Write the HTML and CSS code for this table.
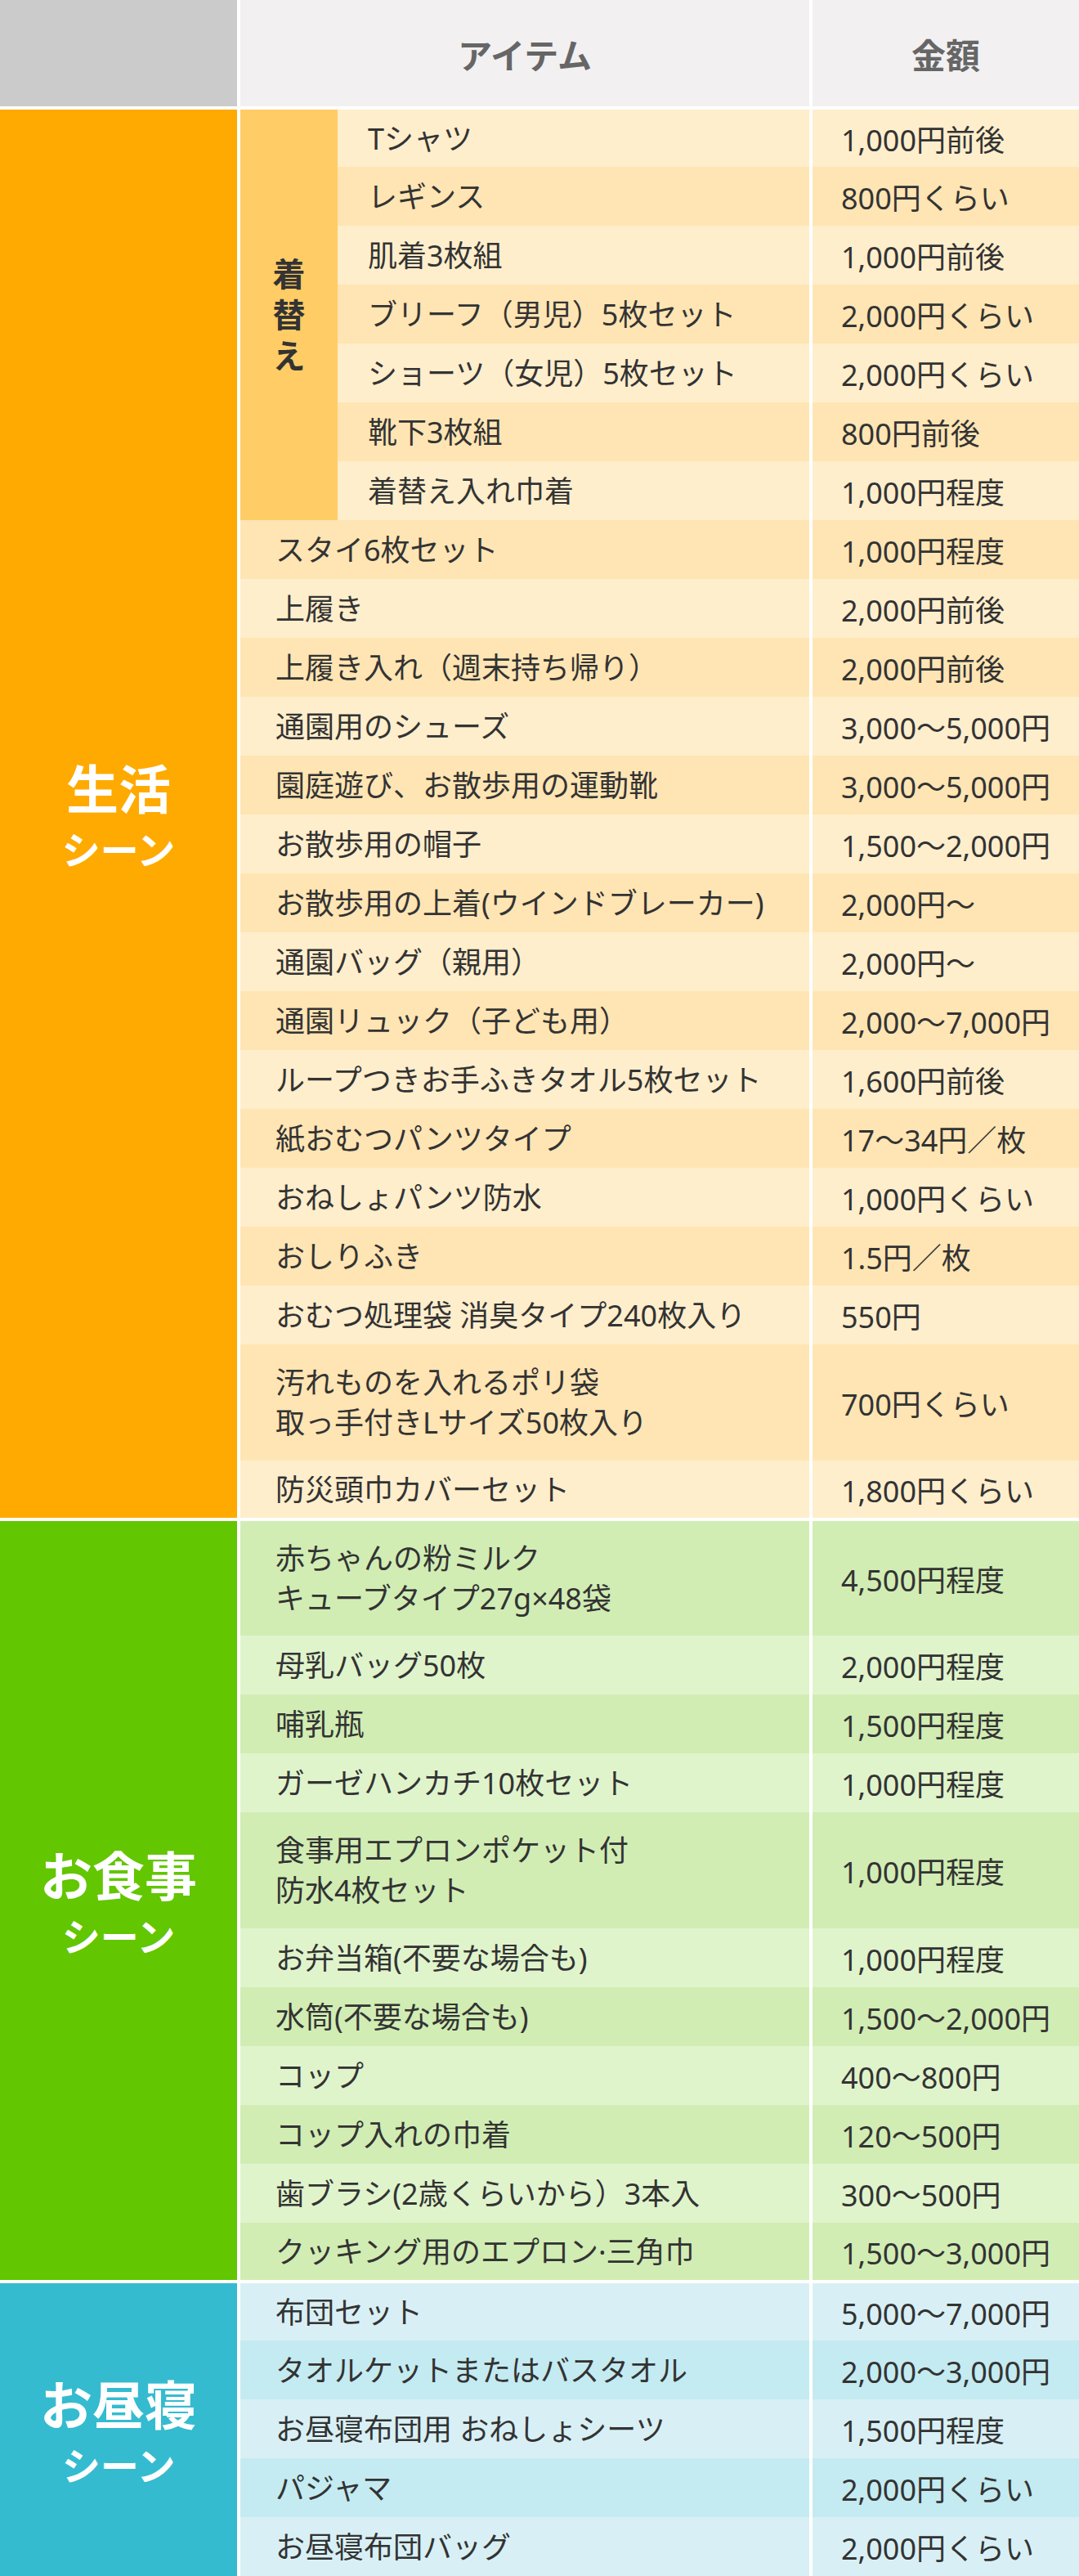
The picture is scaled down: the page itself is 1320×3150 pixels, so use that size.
FILE: index.html
```html
<!DOCTYPE html>
<html lang="ja">
<head>
<meta charset="utf-8">
<title>入園準備 費用一覧</title>
<link rel="stylesheet" href="styles.css">
</head>
<body>
<div class="tbl">
  <div class="head">
    <div class="corner"></div>
    <div class="hcell">アイテム</div>
    <div class="hcell">金額</div>
  </div>

  <section class="sec life">
    <div class="label"><span class="big">生活</span><span class="small">シーン</span></div>
    <div class="rows">
      <div class="group">
        <div class="sublabel"><span>着替え</span></div>
        <div class="subrows">
          <div class="row a first"><div class="item in">Tシャツ</div><div class="price">1,000円前後</div></div>
          <div class="row b"><div class="item in">レギンス</div><div class="price">800円くらい</div></div>
          <div class="row a"><div class="item in">肌着3枚組</div><div class="price">1,000円前後</div></div>
          <div class="row b"><div class="item in">ブリーフ（男児）5枚セット</div><div class="price">2,000円くらい</div></div>
          <div class="row a"><div class="item in">ショーツ（女児）5枚セット</div><div class="price">2,000円くらい</div></div>
          <div class="row b"><div class="item in">靴下3枚組</div><div class="price">800円前後</div></div>
          <div class="row a"><div class="item in">着替え入れ巾着</div><div class="price">1,000円程度</div></div>
        </div>
      </div>
      <div class="row b"><div class="item">スタイ6枚セット</div><div class="price">1,000円程度</div></div>
      <div class="row a"><div class="item">上履き</div><div class="price">2,000円前後</div></div>
      <div class="row b"><div class="item">上履き入れ（週末持ち帰り）</div><div class="price">2,000円前後</div></div>
      <div class="row a"><div class="item">通園用のシューズ</div><div class="price">3,000〜5,000円</div></div>
      <div class="row b"><div class="item">園庭遊び、お散歩用の運動靴</div><div class="price">3,000〜5,000円</div></div>
      <div class="row a"><div class="item">お散歩用の帽子</div><div class="price">1,500〜2,000円</div></div>
      <div class="row b"><div class="item">お散歩用の上着(ウインドブレーカー)</div><div class="price">2,000円〜</div></div>
      <div class="row a"><div class="item">通園バッグ（親用）</div><div class="price">2,000円〜</div></div>
      <div class="row b"><div class="item">通園リュック（子ども用）</div><div class="price">2,000〜7,000円</div></div>
      <div class="row a"><div class="item">ループつきお手ふきタオル5枚セット</div><div class="price">1,600円前後</div></div>
      <div class="row b"><div class="item">紙おむつパンツタイプ</div><div class="price">17〜34円／枚</div></div>
      <div class="row a"><div class="item">おねしょパンツ防水</div><div class="price">1,000円くらい</div></div>
      <div class="row b"><div class="item">おしりふき</div><div class="price">1.5円／枚</div></div>
      <div class="row a"><div class="item">おむつ処理袋 消臭タイプ240枚入り</div><div class="price">550円</div></div>
      <div class="row b two"><div class="item">汚れものを入れるポリ袋<br>取っ手付きLサイズ50枚入り</div><div class="price">700円くらい</div></div>
      <div class="row a last"><div class="item">防災頭巾カバーセット</div><div class="price">1,800円くらい</div></div>
    </div>
  </section>

  <section class="sec meal">
    <div class="label"><span class="big">お食事</span><span class="small">シーン</span></div>
    <div class="rows">
      <div class="row b two first"><div class="item">赤ちゃんの粉ミルク<br>キューブタイプ27g×48袋</div><div class="price">4,500円程度</div></div>
      <div class="row a"><div class="item">母乳バッグ50枚</div><div class="price">2,000円程度</div></div>
      <div class="row b"><div class="item">哺乳瓶</div><div class="price">1,500円程度</div></div>
      <div class="row a"><div class="item">ガーゼハンカチ10枚セット</div><div class="price">1,000円程度</div></div>
      <div class="row b two"><div class="item">食事用エプロンポケット付<br>防水4枚セット</div><div class="price">1,000円程度</div></div>
      <div class="row a"><div class="item">お弁当箱(不要な場合も)</div><div class="price">1,000円程度</div></div>
      <div class="row b"><div class="item">水筒(不要な場合も)</div><div class="price">1,500〜2,000円</div></div>
      <div class="row a"><div class="item">コップ</div><div class="price">400〜800円</div></div>
      <div class="row b"><div class="item">コップ入れの巾着</div><div class="price">120〜500円</div></div>
      <div class="row a"><div class="item">歯ブラシ(2歳くらいから）3本入</div><div class="price">300〜500円</div></div>
      <div class="row b last"><div class="item">クッキング用のエプロン·三角巾</div><div class="price">1,500〜3,000円</div></div>
    </div>
  </section>

  <section class="sec nap">
    <div class="label"><span class="big">お昼寝</span><span class="small">シーン</span></div>
    <div class="rows">
      <div class="row a first"><div class="item">布団セット</div><div class="price">5,000〜7,000円</div></div>
      <div class="row b"><div class="item">タオルケットまたはバスタオル</div><div class="price">2,000〜3,000円</div></div>
      <div class="row a"><div class="item">お昼寝布団用 おねしょシーツ</div><div class="price">1,500円程度</div></div>
      <div class="row b"><div class="item">パジャマ</div><div class="price">2,000円くらい</div></div>
      <div class="row a"><div class="item">お昼寝布団バッグ</div><div class="price">2,000円くらい</div></div>
    </div>
  </section>
</div>
</body>
</html>
```

FILE: styles.css
```css
html, body {
  margin: 0;
  padding: 0;
  background: #ffffff;
}

body {
  font-family: "Noto Sans", "Noto Sans CJK JP", sans-serif;
  color: #333333;
}

.tbl {
  width: 1320px;
  display: flex;
  flex-direction: column;
  gap: 4px;
}

/* header */
.head {
  display: grid;
  grid-template-columns: 290px 1fr 326px;
  column-gap: 4px;
  height: 130px;
}

.corner {
  background: #cbcbcb;
}

.hcell {
  background: #f2f0f1;
  color: #666666;
  font-size: 42px;
  font-weight: 700;
  display: flex;
  align-items: center;
  justify-content: center;
}

/* sections */
.sec {
  display: grid;
  grid-template-columns: 290px 1fr;
  column-gap: 4px;
}

.label {
  display: flex;
  flex-direction: column;
  align-items: center;
  justify-content: center;
  gap: 6px;
  padding-top: 6px;
  color: #ffffff;
  font-weight: 700;
}

.label .big {
  font-size: 64px;
  line-height: 76px;
}

.label .small {
  font-size: 47px;
  line-height: 60px;
}

.life .label { background: #ffaa00; }
.meal .label { background: #62c600; }
.nap .label { background: #35bbd0; }

.rows {
  display: flex;
  flex-direction: column;
}

.group {
  display: grid;
  grid-template-columns: 119px 1fr;
}

.sublabel {
  background: #ffcc66;
  display: flex;
  align-items: center;
  justify-content: center;
}

.sublabel span {
  display: block;
  width: 1em;
  font-size: 40px;
  line-height: 50px;
  font-weight: 700;
  color: #333333;
  text-align: center;
}

.subrows {
  display: flex;
  flex-direction: column;
}

/* rows */
.row {
  display: grid;
  grid-template-columns: 1fr 326px;
  column-gap: 4px;
  height: 72px;
  font-size: 36px;
}

.row.first,
.row.last {
  height: 70px;
}

.row.two {
  height: 142px;
}

.row.two.first,
.row.two.last {
  height: 140px;
}

.row > div {
  background: var(--bg);
  display: flex;
  align-items: center;
  white-space: nowrap;
}

.item {
  padding-left: 43px;
  line-height: 49px;
}

.item.in {
  padding-left: 37px;
}

.price {
  padding-left: 35px;
}

.life .row.a { --bg: #ffeecc; }
.life .row.b { --bg: #ffe5b3; }
.meal .row.a { --bg: #e0f4cc; }
.meal .row.b { --bg: #d1edb4; }
.nap .row.a { --bg: #d8f0f5; }
.nap .row.b { --bg: #c4ebf1; }
```
